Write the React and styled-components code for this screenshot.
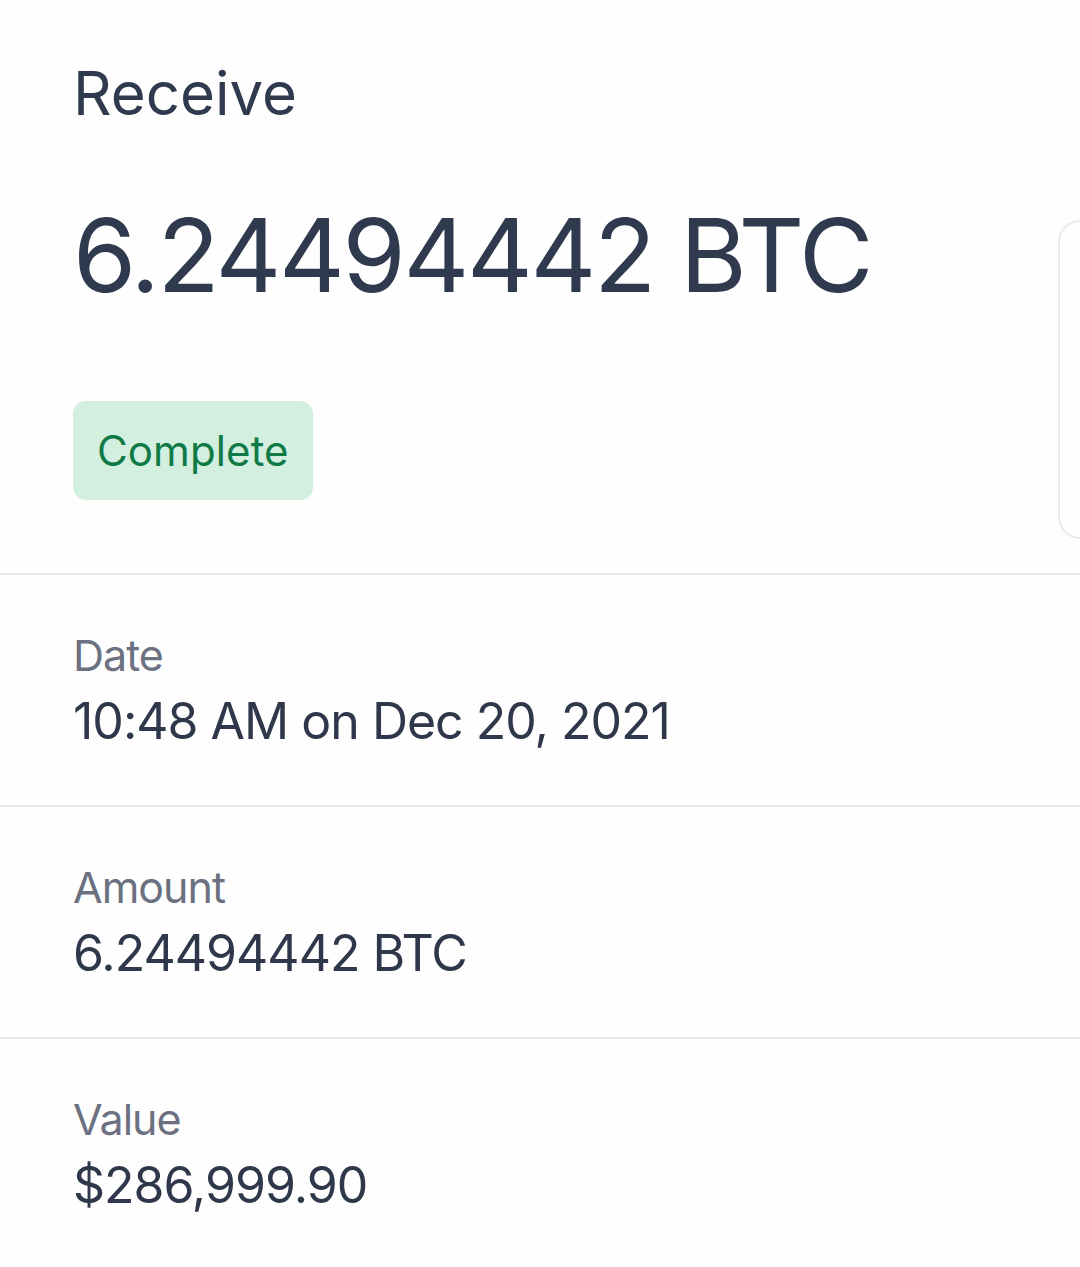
import styled, { createGlobalStyle } from "styled-components";

const GlobalStyle = createGlobalStyle`
  html, body {
    margin: 0;
    padding: 0;
    background: #fefefe;
    overflow: hidden;
  }
  body {
    font-family: Inter, "Liberation Sans", sans-serif;
    color: #303a4e;
  }
`;

const Page = styled.div`
  position: relative;
  width: 1080px;
  min-height: 1267px;
  background: #fefefe;
`;

const Header = styled.div`
  display: flex;
  flex-direction: column;
  align-items: flex-start;
  padding: 57px 73px 73px;
  border-bottom: 2px solid #e7e7e7;
`;

const Title = styled.div`
  font-size: 60px;
  line-height: 72px;
  letter-spacing: 0;
`;

const BigAmount = styled.div`
  margin-top: 65px;
  font-size: 102px;
  line-height: 122px;
  letter-spacing: -2.4px;
`;

const Badge = styled.div`
  margin-top: 85px;
  height: 99px;
  display: flex;
  align-items: center;
  padding: 0 24px;
  border-radius: 13px;
  background: #d3efdf;
  color: #107a47;
  font-size: 42px;
  letter-spacing: 0.1px;
`;

const Row = styled.div`
  display: flex;
  flex-direction: column;
  gap: 10px;
  padding: 54px 73px;
  border-bottom: ${({ $last }) => ($last ? "none" : "2px solid #e7e7e7")};
`;

const Label = styled.div`
  font-size: 43px;
  line-height: 52px;
  letter-spacing: -1px;
  color: #6b7180;
`;

const Value = styled.div`
  font-size: 50px;
  line-height: 60px;
  letter-spacing: -1px;
  color: #2f384b;
`;

const SideCard = styled.div`
  position: absolute;
  right: 0;
  top: 220px;
  width: 20px;
  height: 315px;
  border: 2px solid #e9e9e9;
  border-right: none;
  border-radius: 34px 0 0 34px;
  background: #fefefe;
`;

const rows = [
  { label: "Date", value: "10:48 AM on Dec 20, 2021" },
  { label: "Amount", value: "6.24494442 BTC" },
  { label: "Value", value: "$286,999.90" },
];

const App = () => {
  return (
    <Page>
      <GlobalStyle />
      <Header>
        <Title>Receive</Title>
        <BigAmount>6.24494442 BTC</BigAmount>
        <Badge>Complete</Badge>
      </Header>
      {rows.map((row, i) => (
        <Row key={row.label} $last={i === rows.length - 1}>
          <Label>{row.label}</Label>
          <Value>{row.value}</Value>
        </Row>
      ))}
      <SideCard />
    </Page>
  );
};

export default App;
